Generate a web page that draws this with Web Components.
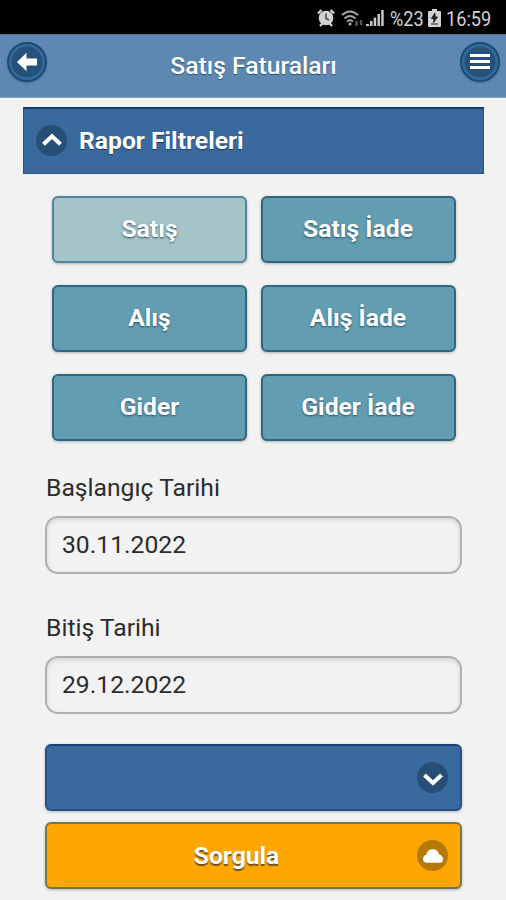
<!DOCTYPE html>
<html lang="tr">
<head>
<meta charset="utf-8">
<title>Satış Faturaları</title>
<style>
  html, body { margin: 0; }
  body { width: 506px; height: 900px; overflow: hidden; background: #f2f2f2; font-family: Roboto, "Liberation Sans", sans-serif; color: #333; }
</style>
</head>
<body>
<invoice-app></invoice-app>
<script>
const define = (name, html) => customElements.define(name, class extends HTMLElement {
  constructor() {
    super();
    const t = document.createElement('template');
    t.innerHTML = html;
    this.attachShadow({ mode: 'open' }).append(t.content.cloneNode(true));
  }
});

define('status-bar', `
<style>
  :host { display: flex; box-sizing: border-box; height: 34px; padding: 2px 14px 0 0; background: #000; color: #d2d2d2; justify-content: flex-end; align-items: center; font-size: 20.5px; line-height: 32px; }
  svg { display: block; flex: none; }
  span { white-space: nowrap; transform: scaleX(.885); transform-origin: 0 50%; display: block; margin-top: 1px; }
</style>
<svg width="18" height="18" viewBox="0 0 18 18"><circle cx="9" cy="9" r="7.3" fill="#d2d2d2"/><path d="M1 4.500 4.500 1M17 4.500 13.500 1M3 17l2.500-2.500M15 17l-2.500-2.500" stroke="#d2d2d2" stroke-width="2.400"/><path d="M9 4.500V9.500L12 11" fill="none" stroke="#444" stroke-width="1.500"/></svg>
<svg width="22" height="19" viewBox="0 0 22 19" style="margin-left:6px" fill="none"><path d="M1 6Q9-1 17 6M3.500 9.500Q9 4.500 14.500 9.500M6 12.500Q9 10 12 12.500" stroke="#aaa" stroke-width="2"/><circle cx="9" cy="15" r="1.600" fill="#aaa"/><path d="M15.500 12v5M20 11v5" stroke="#555" stroke-width="2.500"/></svg>
<svg width="19" height="18" viewBox="0 0 19 18" style="margin-left:3px"><path d="M0 17v-2h3v2zM4 17v-5h2.500v5zM7.700 17V8.500h2.500V17zM11.500 17V5H14v12zM15.200 17V1h2.500v16z" fill="#c8c8c8"/></svg>
<span style="margin-left:5px;width:33px">%23</span>
<svg width="13" height="18" viewBox="0 0 13 18" style="margin-left:5px"><path d="M4 0h5v2h3q1 0 1 1v14q0 1-1 1H1q-1 0-1-1V3q0-1 1-1h3z" fill="#d2d2d2"/><path d="M7 4 3.500 9.500H6L5.500 13.500 9.500 8H7zM3 15h7" fill="#222" stroke="#222"/></svg>
<span style="margin-left:5px;width:46px">16:59</span>
`);

const glyphs = {
  back: '<path d="M0 10 9.500 .8V6.500H20v7H9.500v5.700z"/>',
  menu: '<path d="M0 2h20v3H0zM0 8h20v3H0zM0 14h20v3H0z"/>',
  up: '<path d="M1.500 13.300 10 5.300l8.500 8" fill="none" stroke="#fff" stroke-width="4"/>',
  down: '<path d="M1.500 7 10 15l8.500-8" fill="none" stroke="#fff" stroke-width="4"/>',
  cloud: '<path d="M3.800 16.700Q0 16.500 0 13 0 9.500 3.200 8.700 4.500 3.200 9.500 3.200 14.500 3.200 16.300 8.500 20 9.500 20 13.200 20 16.700 16.500 16.700z"/>'
};
customElements.define('disc-icon', class extends HTMLElement {
  constructor() {
    super();
    this.attachShadow({ mode: 'open' }).innerHTML = `
<style>
  :host { display: flex; flex: none; box-sizing: border-box; width: 31px; height: 31px; border-radius: 50%; align-items: center; justify-content: center; background: var(--disc, #274f76); }
  :host([ringed]) { width: 40px; height: 40px; border: 2px solid #194b77; background: radial-gradient(circle, #27507a 0 15px, #346b9b 16px); box-shadow: 0 1px 2px #0003; }
  svg { display: block; fill: #fff; }
</style><svg width="20" height="20" viewBox="0 0 20 20">${glyphs[this.getAttribute('glyph')]}</svg>`;
  }
});

define('title-bar', `
<style>
  :host { display: flex; box-sizing: border-box; height: 64px; padding: 7px 6px 0 7px; justify-content: space-between; background: #5e88b1; border-bottom: 1px solid #86a5c3; border-top: 1px solid #51749a; color: #fff; }
  h1 { margin: 5px 0 0; font-size: 24.7px; line-height: 38px; font-weight: 500; text-shadow: 0 1px 1px #2b5278; white-space: nowrap; }
</style>
<disc-icon glyph="back" ringed></disc-icon><h1><slot></slot></h1><disc-icon glyph="menu" ringed></disc-icon>
`);

define('filter-heading', `
<style>
  :host { display: flex; box-sizing: border-box; height: 67px; margin: 0 22px 0 23px; padding: 0 12px 1px; gap: 12px; align-items: center; background: #3a6a9d; border: 1px solid #225582; border-top: 2px solid #123a6c; color: #fff; font-size: 24.7px; font-weight: 700; text-shadow: 0 1px 1px #163a60; }
</style>
<disc-icon glyph="up"></disc-icon><span><slot></slot></span>
`);

define('push-button', `
<style>
  :host { display: grid; box-sizing: border-box; height: 67px; place-items: center; background: #629db2; border: 2px solid #2f6683; border-radius: 6px; box-shadow: 0 1px 3px #0004; color: #fff; font-size: 24.7px; font-weight: 700; line-height: 28px; text-shadow: 0 1px 2px #245066; }
  :host([active]) { background: #a5c4c8; border-color: #52859a; }
  span { padding-bottom: 1px; }
</style>
<span><slot></slot></span>
`);

define('wide-button', `
<style>
  :host { display: grid; box-sizing: border-box; height: 67px; padding: 0 12px; grid-template-columns: 31px 1fr 31px; align-items: center; background: #3a6a9d; border: 2px solid #255280; border-top-color: #174575; border-radius: 6px; box-shadow: 0 1px 3px #0004; color: #fff; font-size: 24.7px; font-weight: 700; text-shadow: 0 2px 1px #333b; }
  :host([accent]) { background: #ffa600; border-color: #6d7a58; --disc: #b57908; }
  .label { grid-column: 2; text-align: center; padding-right: 34px; }
  ::slotted(disc-icon) { grid-column: 3; }
</style>
<span class="label"><slot></slot></span><slot name="icon"></slot>
`);

define('date-field', `
<style>
  :host { display: block; color: #2c2c2c; font-size: 24.7px; }
  .label { line-height: 30px; height: 43px; padding-left: 1px; }
  .box { box-sizing: border-box; height: 58px; line-height: 54px; padding-left: 15px; border: 2px solid #b0b0b0; border-radius: 13px; box-shadow: inset 0 2px 4px #0002; }
</style>
<div class="label"><slot name="label"></slot></div><div class="box"><slot></slot></div>
`);

define('invoice-app', `
<style>
  :host { display: block; }
  .types { display: grid; grid-template-columns: 195px 195px; gap: 22px 13.500px; margin: 22px 0 0 52px; }
  .form { margin: 32px 44px 0 45px; display: grid; }
  date-field + date-field { margin-top: 39px; }
  .first { margin-top: 30px; }
  .last { margin-top: 11px; }
  filter-heading { margin-top: 9px; }
</style>
<status-bar></status-bar>
<title-bar>Satış Faturaları</title-bar>
<filter-heading>Rapor Filtreleri</filter-heading>
<div class="types">
  <push-button active>Satış</push-button><push-button>Satış İade</push-button>
  <push-button>Alış</push-button><push-button>Alış İade</push-button>
  <push-button>Gider</push-button><push-button>Gider İade</push-button>
</div>
<div class="form">
  <date-field><span slot="label">Başlangıç Tarihi</span>30.11.2022</date-field>
  <date-field><span slot="label">Bitiş Tarihi</span>29.12.2022</date-field>
  <wide-button class="first"><disc-icon slot="icon" glyph="down"></disc-icon></wide-button>
  <wide-button class="last" accent>Sorgula<disc-icon slot="icon" glyph="cloud"></disc-icon></wide-button>
</div>
`);
</script>
</body>
</html>
